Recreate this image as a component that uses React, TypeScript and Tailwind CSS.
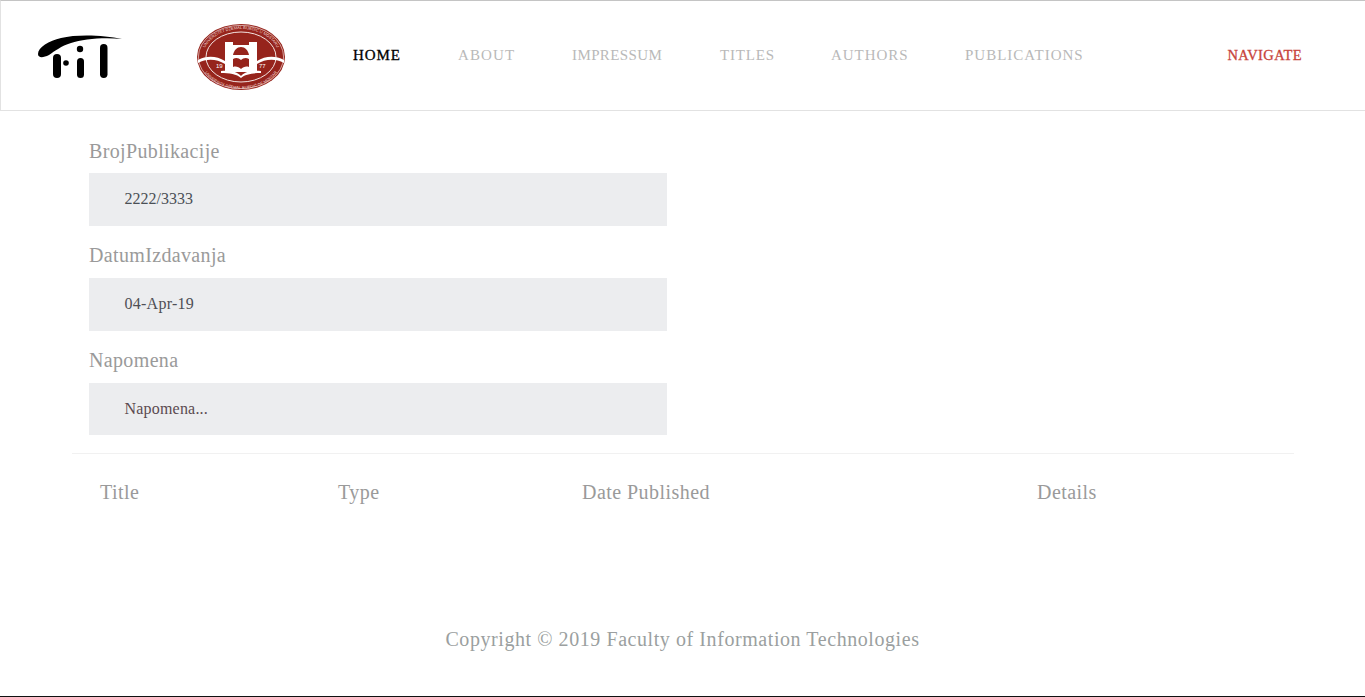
const navLinks = [
  { label: 'HOME', cls: 'text-[#000000] w-[105px] tracking-[0.9px] [-webkit-text-stroke:0.3px_#000000]' },
  { label: 'ABOUT', cls: 'text-[#b9b9b9] w-[114px] tracking-[1.1px]' },
  { label: 'IMPRESSUM', cls: 'text-[#b9b9b9] w-[148px] tracking-[0.4px]' },
  { label: 'TITLES', cls: 'text-[#b9b9b9] w-[111px] tracking-[0.8px]' },
  { label: 'AUTHORS', cls: 'text-[#b9b9b9] w-[134px] tracking-[0.95px]' },
  { label: 'PUBLICATIONS', cls: 'text-[#b9b9b9] w-[150px] tracking-[1px]' },
]

const fields = [
  { label: 'BrojPublikacije', value: '2222/3333', color: 'text-[#4a4f55]', h: 'h-[53px]', top: 'pt-[1px]' },
  { label: 'DatumIzdavanja', value: '04-Apr-19', color: 'text-[#4f4f55] tracking-[0.25px]', h: 'h-[53px]', top: '' },
  { label: 'Napomena', value: 'Napomena...', color: 'text-[#5a4a4f] tracking-[0.2px]', h: 'h-[52px]', top: '' },
]

function FitLogo() {
  return (
    <svg width="84" height="44" viewBox="0 0 84 44" className="shrink-0">
      <path
        d="M0 20C0 13 11 7 23 4C39 0 66 1 84 5C66 3 45 5 33 9C23 12 17 17 11 21C5 24 0 24 0 20Z"
        fill="#000"
      />
      <rect x="15" y="20" width="8" height="24" rx="4" fill="#000" />
      <circle cx="28" cy="29" r="2.8" fill="#000" />
      <circle cx="42" cy="15" r="3.2" fill="#000" />
      <rect x="39" y="24" width="7" height="20" rx="3.5" fill="#000" />
      <rect x="62" y="10" width="7.5" height="34" rx="3.7" fill="#000" />
    </svg>
  )
}

function UniLogo() {
  return (
    <svg width="88" height="66" viewBox="0 0 88 66" className="shrink-0">
      <defs>
        <path id="uni-top" d="M6 33A38 28 0 0 1 82 33" />
        <path id="uni-bottom" d="M4 36A40 29 0 0 0 84 36" />
      </defs>
      <ellipse cx="44" cy="33" rx="44" ry="33" fill="#96241c" />
      <ellipse cx="44" cy="33" rx="42.6" ry="31.6" fill="none" stroke="#f0d8d5" strokeWidth="0.7" />
      <ellipse cx="44" cy="33" rx="35" ry="25" fill="none" stroke="#f3e3e1" strokeWidth="1" />
      <text fontSize="4" fill="#f3dcd9" fontFamily="'Liberation Sans', sans-serif" textAnchor="middle">
        <textPath href="#uni-top" startOffset="50%">UNIVERZITET DŽEMAL BIJEDIĆ U MOSTARU</textPath>
      </text>
      <text fontSize="4" fill="#f3dcd9" fontFamily="'Liberation Sans', sans-serif" textAnchor="middle">
        <textPath href="#uni-bottom" startOffset="50%">UNIVERSITY DŽEMAL BIJEDIĆ OF MOSTAR</textPath>
      </text>
      {/* side waves */}
      <path d="M1 36C10 31 20 32 28 37V40C20 35 10 34 1 39Z" fill="#fff" />
      <path d="M87 36C78 31 68 32 60 37V40C68 35 78 34 87 39Z" fill="#fff" />
      {/* bridge */}
      <path d="M28 18H36V21H52V18H60V48H28Z" fill="#fff" />
      <path d="M36 31C37 26 40 23 44 23C48 23 51 26 52 31Z" fill="#96241c" />
      <path d="M36 35C39 33 42 34 44 36C46 34 49 33 52 35V43C49 42 46 43 44 45C42 43 39 42 36 43Z" fill="#96241c" />
      <path d="M24 47C32 46 40 47 44 52C48 47 56 46 64 47V49C56 49 48 50 44 54C40 50 32 49 24 49Z" fill="#fff" />
      <text x="19" y="44" fontSize="6" fill="#fff" fontFamily="'Liberation Sans', sans-serif">19</text>
      <text x="62" y="44" fontSize="6" fill="#fff" fontFamily="'Liberation Sans', sans-serif">77</text>
    </svg>
  )
}

export default function App() {
  return (
    <div className="h-[697px] overflow-hidden bg-white flex flex-col font-['Liberation_Serif',serif]">
      <header className="h-[111px] shrink-0 flex items-center border border-[#e2e2e2] border-t-[#c4c4c4] border-r-0 pl-[37px] pr-[63px]">
        <FitLogo />
        <div className="ml-[75px] mt-[2px]">
          <UniLogo />
        </div>
        <nav className="ml-[68px] flex text-[15px] leading-[20px] -mt-[1px]">
          {navLinks.map((link) => (
            <a key={link.label} className={link.cls}>
              {link.label}
            </a>
          ))}
        </nav>
        <a className="ml-auto text-[14.5px] tracking-[0.4px] text-[#c8443c] [-webkit-text-stroke:0.3px_#c8443c]">
          NAVIGATE
        </a>
      </header>

      <main className="flex-1 flex flex-col">
        <div className="pl-[89px] pt-[27px] w-[667px] box-content">
          {fields.map((field) => (
            <div key={field.label} className="mb-[17px] last:mb-0">
              <label className={`block h-[35px] ${field.top} leading-[25px] text-[20px] tracking-[0.35px] text-[#9a9a9a]`}>
                {field.label}
              </label>
              <div className={`w-[578px] ${field.h} bg-[#ecedef] flex items-center pl-[35.5px] pb-[1px] text-[16px] leading-none`}>
                <span className={field.color}>{field.value}</span>
              </div>
            </div>
          ))}
        </div>

        <div className="ml-[72px] w-[1222px] mt-[18px] border-t border-[#f1f1f1]" />

        <div className="grid grid-cols-[238px_244px_455px_1fr] pl-[100px] pt-[26px] text-[20px] tracking-[0.45px] text-[#9a9a9a] leading-[24px]">
          <span>Title</span>
          <span>Type</span>
          <span>Date Published</span>
          <span>Details</span>
        </div>

        <footer className="mt-[123px] text-center text-[20px] tracking-[0.57px] leading-[24px] text-[#9b9fa0]">
          Copyright © 2019 Faculty of Information Technologies
        </footer>
      </main>

      <div className="h-[1px] shrink-0 bg-[#111111]" />
    </div>
  )
}
